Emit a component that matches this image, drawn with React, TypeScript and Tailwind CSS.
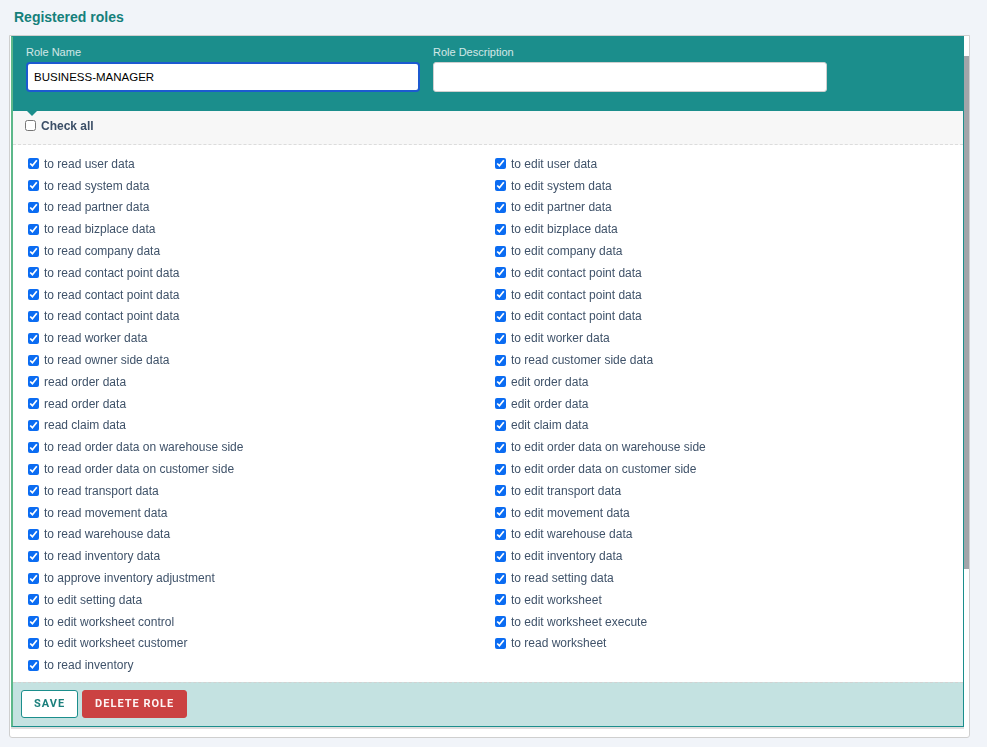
import { useEffect, useRef } from "react";

const readPerms = [
  "to read user data",
  "to read system data",
  "to read partner data",
  "to read bizplace data",
  "to read company data",
  "to read contact point data",
  "to read contact point data",
  "to read contact point data",
  "to read worker data",
  "to read owner side data",
  "read order data",
  "read order data",
  "read claim data",
  "to read order data on warehouse side",
  "to read order data on customer side",
  "to read transport data",
  "to read movement data",
  "to read warehouse data",
  "to read inventory data",
  "to approve inventory adjustment",
  "to edit setting data",
  "to edit worksheet control",
  "to edit worksheet customer",
  "to read inventory",
];

const editPerms = [
  "to edit user data",
  "to edit system data",
  "to edit partner data",
  "to edit bizplace data",
  "to edit company data",
  "to edit contact point data",
  "to edit contact point data",
  "to edit contact point data",
  "to edit worker data",
  "to read customer side data",
  "edit order data",
  "edit order data",
  "edit claim data",
  "to edit order data on warehouse side",
  "to edit order data on customer side",
  "to edit transport data",
  "to edit movement data",
  "to edit warehouse data",
  "to edit inventory data",
  "to read setting data",
  "to edit worksheet",
  "to edit worksheet execute",
  "to read worksheet",
];

const PermRow = ({ label }: { label: string }) => (
  <label className="flex h-[21.8px] items-center gap-[5px] text-[12px] text-[#3f5269]">
    <input type="checkbox" defaultChecked className="m-0 h-[11px] w-[11px] accent-[#0b6cf2]" />
    <span>{label}</span>
  </label>
);

const RoleItem = () => {
  const nameRef = useRef<HTMLInputElement>(null);

  useEffect(() => {
    const el = nameRef.current;
    if (el) {
      el.focus();
      el.setSelectionRange(el.value.length, el.value.length);
    }
  }, []);

  return (
    <div className="ml-[1px] border-y border-r border-l-2 border-[#1b8e8c] border-l-[#5cb88a] shadow-[0_2px_0_#dedede]">
      {/* header with the two fields */}
      <div className="flex gap-[13px] bg-[#1b8e8c] pt-[8px] pb-[19px] pl-[13px]">
        <div className="flex flex-col">
          <span className="mb-[3px] text-[11px] leading-[14px] text-white/80">Role Name</span>
          <input
            ref={nameRef}
            defaultValue="BUSINESS-MANAGER"
            className="h-[30px] w-[394px] rounded-[4px] border-2 border-[#1c5ad0] bg-white px-[6px] text-[11.5px] text-black outline-none"
          />
        </div>
        <div className="flex flex-col">
          <span className="mb-[3px] text-[11px] leading-[14px] text-white/80">Role Description</span>
          <input className="h-[30px] w-[394px] rounded-[3px] border border-[#cfcfcf] bg-white px-[6px] text-[11.5px] outline-none" />
        </div>
      </div>

      <div className="relative flex h-[34px] items-center gap-[5px] border-b border-dashed border-[#dcdcdc] bg-[#f7f7f7] pb-[4px] pl-[12px]">
        <div className="absolute left-[14px] top-0 h-0 w-0 border-x-[5px] border-t-[5px] border-x-transparent border-t-[#1b8e8c]" />
        <input type="checkbox" className="m-0 h-[11px] w-[11px]" />
        <span className="text-[12px] font-bold text-[#3b4e66]">Check all</span>
      </div>

      <div className="grid grid-cols-[467px_1fr] pt-[8px] pb-[6px] pl-[15px]">
        <div className="flex flex-col">
          {readPerms.map((p, i) => (
            <PermRow key={i} label={p} />
          ))}
        </div>
        <div className="flex flex-col">
          {editPerms.map((p, i) => (
            <PermRow key={i} label={p} />
          ))}
        </div>
      </div>

      <div className="flex gap-[4px] border-t border-dashed border-[#d2d2d2] bg-[#c4e2e1] pt-[7px] pb-[8px] pl-[8px] font-['Roboto',sans-serif]">
        <button className="h-[28px] rounded-[3px] border border-[#1b8e8c] bg-white px-[12px] text-[11px] font-bold tracking-[1px] text-[#1b7f7c]">
          SAVE
        </button>
        <button className="h-[28px] rounded-[3px] border border-[#cb4242] bg-[#cb4242] px-[12px] text-[11px] font-bold tracking-[1px] text-white/95">
          DELETE ROLE
        </button>
      </div>
    </div>
  );
};

export default function App() {
  return (
    <div className="min-h-screen bg-[#f1f4f9] font-['Liberation_Sans',Arial,sans-serif]">
      <h2 className="px-[14px] pt-[9px] text-[14px] leading-[16px] font-bold text-[#15807b]">Registered roles</h2>
      <div className="mt-[10px] ml-[9px] flex h-[703px] w-[961px] overflow-hidden rounded-b-[3px] border border-[#cfcfcf] bg-white">
        <div className="min-w-0 flex-1">
          <RoleItem />
        </div>
        {/* scrollbar */}
        <div className="w-[5px] shrink-0 pt-[20px]">
          <div className="h-[513px] bg-[#a2a5a9]" />
        </div>
      </div>
    </div>
  );
}
